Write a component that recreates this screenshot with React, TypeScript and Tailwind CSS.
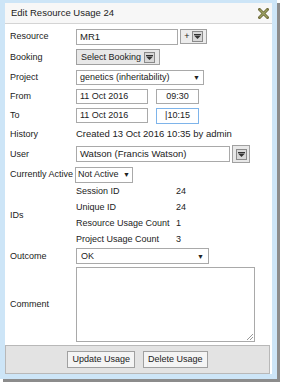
import React from "react";

const font = { fontFamily: '"Liberation Sans", Arial, sans-serif' };

function DropBox() {
  return (
    <span className="inline-flex h-[11px] w-[11px] items-center justify-center border border-[#8a8a8a] bg-[#d8d8d8]">
      <svg width="7" height="5" viewBox="0 0 7 5">
        <rect x="0" y="0" width="7" height="1" fill="#333" />
        <path d="M0 1.5 L7 1.5 L3.5 5 Z" fill="#333" />
      </svg>
    </span>
  );
}

function Caret() {
  return <span className="text-[7px] text-[#222]">▼</span>;
}

function Row({ label, children, h = "h-[19px]" }: { label: string; children: React.ReactNode; h?: string }) {
  return (
    <div className={`flex items-center ${h}`}>
      <div className="w-[66px] shrink-0 whitespace-nowrap">{label}</div>
      <div className="flex items-center">{children}</div>
    </div>
  );
}

export default function App() {
  return (
    <div className="bg-white w-[282px] h-[385px] text-[9px] leading-none text-[#222]" style={font}>
      <div className="w-[280px] h-[382px] flex flex-col">
        <div className="relative w-[277px] h-[379px] border-x-[5px] border-t-[3px] border-b-[5px] border-[#cde5f7] bg-white flex flex-col shadow-[3px_3px_0_#8c8c8c]">
          <div className="flex items-center justify-between h-[21px] pl-[6px] pr-[3px] bg-[#f7f7f7] border-b border-[#d4d4d4] text-[9.5px] text-[#222]">
            <span>Edit Resource Usage 24</span>
            <svg width="11" height="11" viewBox="0 0 11 11">
              <path d="M1.5 1.5 L9.5 9.5 M9.5 1.5 L1.5 9.5" stroke="#6f6a3a" strokeWidth="3" strokeLinecap="square" />
              <path d="M1.5 1.5 L9.5 9.5 M9.5 1.5 L1.5 9.5" stroke="#9aa062" strokeWidth="1.2" />
            </svg>
          </div>
          <div className="flex flex-col pl-[5px] pt-[2px]">
            <Row label="Resource" h="h-[21px]">
              <div className="w-[102px] h-[16px] border border-[#a9a9a9] px-[3px] flex items-center text-[9.5px]">MR1</div>
              <div className="ml-[2px] w-[27px] h-[15px] border border-[#a0a0a0] bg-[#ececec] flex items-center justify-center gap-[2px]">
                <span className="text-[9px]">+</span>
                <DropBox />
              </div>
            </Row>
            <Row label="Booking" h="h-[20px]">
              <div className="h-[16px] w-[84px] border border-[#a0a0a0] bg-[#e8e8e8] flex items-center justify-center gap-[3px] whitespace-nowrap">
                <span>Select Booking</span>
                <DropBox />
              </div>
            </Row>
            <Row label="Project" h="h-[20px]">
              <div className="w-[128px] h-[15px] border border-[#a9a9a9] px-[3px] flex items-center justify-between whitespace-nowrap">
                <span>genetics (inheritability)</span>
                <Caret />
              </div>
            </Row>
            <Row label="From">
              <div className="w-[72px] h-[15px] border border-[#a9a9a9] px-[3px] flex items-center whitespace-nowrap">11 Oct 2016</div>
              <div className="ml-[8px] w-[43px] h-[15px] border border-[#a9a9a9] flex items-center justify-center">09:30</div>
            </Row>
            <Row label="To">
              <div className="w-[72px] h-[15px] border border-[#a9a9a9] px-[3px] flex items-center whitespace-nowrap">11 Oct 2016</div>
              <div className="ml-[8px] w-[43px] h-[16px] border border-[#7eb4ea] flex items-center justify-center">|10:15</div>
            </Row>
            <Row label="History" h="h-[18px]">
              <span className="whitespace-nowrap text-[9.5px]">Created 13 Oct 2016 10:35 by admin</span>
            </Row>
            <Row label="User" h="h-[22px]">
              <div className="w-[154px] h-[16px] border border-[#a9a9a9] px-[3px] flex items-center whitespace-nowrap text-[9.5px]">Watson (Francis Watson)</div>
              <div className="ml-[2px] w-[18px] h-[18px] border border-[#a0a0a0] bg-[#e8e8e8] flex items-center justify-center">
                <DropBox />
              </div>
            </Row>
            <Row label="Currently Active" h="h-[19px]">
              <div className="-ml-[1px] w-[58px] h-[16px] border border-[#a9a9a9] px-[2px] flex items-center justify-between whitespace-nowrap">
                <span>Not Active</span>
                <Caret />
              </div>
            </Row>
            <div className="flex h-[63px] items-center">
              <div className="w-[66px] shrink-0">IDs</div>
              <div className="grid grid-cols-[100px_auto] auto-rows-[15.7px] items-center whitespace-nowrap">
                <span>Session ID</span><span>24</span>
                <span>Unique ID</span><span>24</span>
                <span>Resource Usage Count</span><span>1</span>
                <span>Project Usage Count</span><span>3</span>
              </div>
            </div>
            <Row label="Outcome" h="h-[18px]">
              <div className="w-[133px] h-[16px] border border-[#a9a9a9] px-[4px] flex items-center justify-between">
                <span>OK</span>
                <Caret />
              </div>
            </Row>
            <div className="flex items-center mt-[2px]">
              <div className="w-[66px] shrink-0">Comment</div>
              <div className="relative w-[179px] h-[75px] border border-[#a9a9a9]">
                <svg className="absolute right-[1px] bottom-[1px]" width="6" height="6" viewBox="0 0 6 6">
                  <path d="M6 0 L0 6 M6 3 L3 6" stroke="#999" strokeWidth="1" />
                </svg>
              </div>
            </div>
          </div>
          <div className="mt-[3px] mr-[2px] h-[29px] border border-[#b8b8b8] bg-[#e3e3e3] flex items-center justify-center gap-[8px] whitespace-nowrap">
            <div className="h-[17px] px-[4px] border border-[#a0a0a0] bg-[#f4f4f4] flex items-center">Update Usage</div>
            <div className="h-[17px] px-[4px] border border-[#a0a0a0] bg-[#f4f4f4] flex items-center">Delete Usage</div>
          </div>
        </div>
      </div>
    </div>
  );
}
